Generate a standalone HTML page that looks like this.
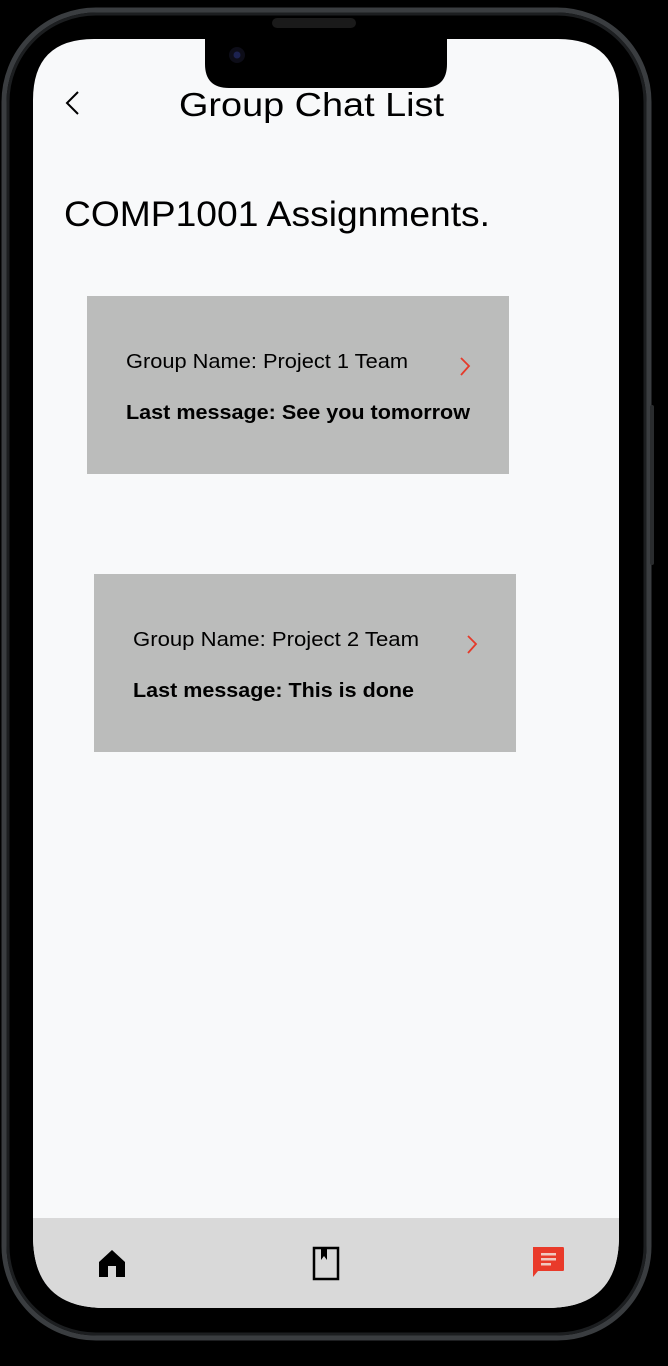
<!DOCTYPE html>
<html><head><meta charset="utf-8"><style>
html,body{margin:0;padding:0;background:#000;width:668px;height:1366px;overflow:hidden}
svg{display:block}
text{font-family:"Liberation Sans",Arial,sans-serif}
</style></head><body>
<svg width="668" height="1366" viewBox="0 0 668 1366" xmlns="http://www.w3.org/2000/svg">
<rect width="668" height="1366" fill="#000"/>
<rect x="4" y="10" width="645" height="1328" rx="92" fill="none" stroke="#3a3d40" stroke-width="5"/>
<rect x="8" y="14" width="637" height="1320" rx="88" fill="none" stroke="#1c1e20" stroke-width="3"/>
<rect x="650" y="405" width="4" height="160" rx="2" fill="#2a2c2e"/>
<path d="M33 100 Q33 39 94 39 L205 39 L205 64 Q205 88 229 88 L423 88 Q447 88 447 64 L447 39 L558 39 Q619 39 619 100 L619 1236 Q619 1308 547 1308 L105 1308 Q33 1308 33 1236 Z" fill="#f8f9fa"/>
<path d="M33 1218 L619 1218 L619 1236 Q619 1308 547 1308 L105 1308 Q33 1308 33 1236 Z" fill="#d9d9d9"/>
<rect x="272" y="18" width="84" height="10" rx="5" fill="#1a1a1a"/>
<circle cx="237" cy="55" r="8" fill="#0d0d18"/>
<circle cx="237" cy="55" r="3.5" fill="#1c2250"/>
<path d="M78 92 L67 103 L78 114" fill="none" stroke="#000" stroke-width="2"/>
<text x="179" y="116" font-size="33" textLength="265" lengthAdjust="spacingAndGlyphs" fill="#000">Group Chat List</text>
<text x="64" y="226" font-size="35" textLength="426" lengthAdjust="spacingAndGlyphs" fill="#000">COMP1001 Assignments.</text>
<rect x="87" y="296" width="422" height="178" fill="#bbbcbb"/>
<text x="126" y="368" font-size="20" textLength="282" lengthAdjust="spacingAndGlyphs" fill="#000">Group Name: Project 1 Team</text>
<text x="126" y="419" font-size="20" font-weight="bold" textLength="344" lengthAdjust="spacingAndGlyphs" fill="#000">Last message: See you tomorrow</text>
<path d="M461 358 L469 366 L461 375" fill="none" stroke="#e53a2a" stroke-width="1.8"/>
<rect x="94" y="574" width="422" height="178" fill="#bbbcbb"/>
<text x="133" y="646" font-size="20" textLength="286" lengthAdjust="spacingAndGlyphs" fill="#000">Group Name: Project 2 Team</text>
<text x="133" y="697" font-size="20" font-weight="bold" textLength="281" lengthAdjust="spacingAndGlyphs" fill="#000">Last message: This is done</text>
<path d="M468 636 L476 644 L468 653" fill="none" stroke="#e53a2a" stroke-width="1.8"/>
<path d="M99 1277 L99 1262 L112 1250 L125 1262 L125 1277 L116 1277 L116 1266 L108 1266 L108 1277 Z" fill="#000"/>
<rect x="314" y="1248" width="24" height="31" fill="none" stroke="#000" stroke-width="2.5"/>
<path d="M321 1249 L321 1260 L324 1256 L327 1260 L327 1249" fill="#000"/>
<path d="M533 1247 L563 1247 Q564 1247 564 1249 L564 1270 Q564 1271 562 1271 L538 1271 L533 1277 Z" fill="#e93a2a"/>
<rect x="541" y="1253" width="15" height="2.5" fill="#f0c8c0"/>
<rect x="541" y="1258" width="15" height="2.5" fill="#f0c8c0"/>
<rect x="541" y="1263" width="10" height="2.5" fill="#f0c8c0"/>
</svg>
</body></html>
